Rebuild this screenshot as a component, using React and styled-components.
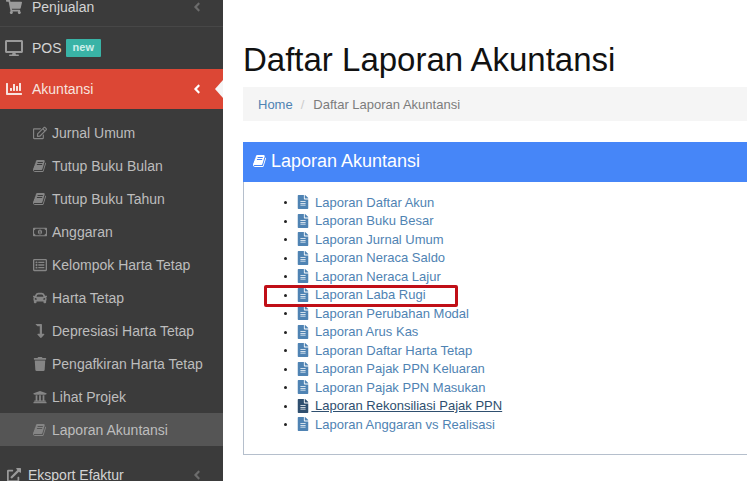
import React from "react";
import styled, { createGlobalStyle } from "styled-components";
import {
  FaAngleLeft,
  FaCar,
  FaChartBar,
  FaDesktop,
  FaExternalLinkAlt,
  FaFileAlt,
  FaLevelDownAlt,
  FaRegEdit,
  FaRegListAlt,
  FaRegMoneyBillAlt,
  FaShoppingCart,
  FaTrash,
  FaUniversity,
} from "react-icons/fa";

const GlobalStyle = createGlobalStyle`
  html, body {
    margin: 0;
    height: 100%;
    overflow: hidden;
    background: #fff;
    font-family: "Liberation Sans", Arial, sans-serif;
  }
  * {
    box-sizing: border-box;
  }
`;

// the slanted book of the old icon font, the packages only have the upright one
const SlantedBook = ({ className }) => (
  <svg className={className} viewBox="0 0 1792 1792" width="1em" height="1em" fill="currentColor">
    <path d="M1639 478q40 57 18 129l-275 906q-19 64-76.5 107.5t-122.5 43.5h-923q-77 0-148.5-53.5t-99.5-131.5q-24-67-2-127 0-4 3-27t4-37q1-8-3-21.5t-3-19.5q2-11 8-21t16.5-23.5 16.5-23.5q23-38 45-91.5t30-91.5q3-10 .5-30t-.5-28q3-11 17-28t17-23q21-36 42-92t25-90q1-9-2.5-32t.5-28q4-13 22-30.5t22-22.5q19-26 42.5-84.5t27.5-96.5q1-8-3-25.5t-2-26.5q2-8 9-18t18-23 17-21q8-12 16.5-30.5t15-35 16-36 19.5-32 26.5-23.5 36-11.5 47.5 5.5l-1 3q38-9 51-9h761q74 0 114 56t18 130l-274 906q-36 119-71.5 153.5t-128.5 34.5h-869q-27 0-38 15-11 16-1 43 24 70 144 70h923q29 0 56-15.5t35-41.5l300-987q7-22 5-57 38 15 59 43zm-1064 2q-4 13 2 22.5t20 9.5h608q13 0 25.5-9.5t16.5-22.5l21-64q4-13-2-22.5t-20-9.5h-608q-13 0-25.5 9.5t-16.5 22.5zm-83 256q-4 13 2 22.5t20 9.5h608q13 0 25.5-9.5t16.5-22.5l21-64q4-13-2-22.5t-20-9.5h-608q-13 0-25.5 9.5t-16.5 22.5z" />
  </svg>
);

const Page = styled.div`
  display: flex;
  width: 747px;
  height: 481px;
  overflow: hidden;
`;

const Sidebar = styled.aside`
  flex: 0 0 223px;
  background: #3b3b3b;
  overflow: hidden;
`;

const Menu = styled.nav`
  margin-top: -13px;
`;

const MenuRow = styled.div`
  position: relative;
  display: flex;
  align-items: center;
  height: ${(p) => p.h || 40}px;
  padding: 0 19px 0 4px;
  color: ${(p) => (p.active ? "#f7e3df" : "#d4d4d4")};
  background: ${(p) => (p.active ? "#dc4735" : "transparent")};
  border-bottom: ${(p) => (p.divider ? "1px solid #474747" : "none")};
  font-size: 14px;
`;

const MenuIcon = styled.span`
  display: flex;
  justify-content: center;
  flex: 0 0 19px;
  margin-right: 9px;
  font-size: ${(p) => p.size || 16}px;
  color: ${(p) => (p.active ? "#f7e3df" : "#9a9a9a")};
`;

const MenuLabel = styled.span`
  display: flex;
  align-items: center;
  flex: 1;
  margin-left: ${(p) => p.shift || 0}px;
`;

const Chevron = styled(FaAngleLeft)`
  font-size: 14px;
  color: ${(p) => (p.$active ? "#fff" : "#6c6c6c")};
`;

const Badge = styled.span`
  margin-left: 4px;
  padding: 2px 7px 3px;
  font-size: 11px;
  font-weight: 700;
  line-height: 13px;
  color: #cdeeea;
  background: #39b3a6;
  border-radius: 1px;
`;

const Notch = styled.span`
  position: absolute;
  top: 11px;
  right: 0;
  border-top: 9px solid transparent;
  border-bottom: 9px solid transparent;
  border-right: 8px solid #f6f6f6;
`;

const SubList = styled.div`
  padding: 7px 0 9px;
`;

const SubRow = styled.div`
  display: flex;
  align-items: center;
  height: 33px;
  padding-left: 32px;
  font-size: 14px;
  color: #bdbdbd;
  background: ${(p) => (p.current ? "#555" : "transparent")};
`;

const SubIcon = styled.span`
  display: flex;
  justify-content: center;
  flex: 0 0 16px;
  margin-right: 4px;
  font-size: 14px;
  color: #858585;
`;

const Main = styled.main`
  flex: 1;
  min-width: 0;
  padding: 0 0 0 20px;
  overflow: hidden;
`;

const Heading = styled.h1`
  margin: 0;
  padding-top: 40px;
  height: 87px;
  font-size: 33px;
  font-weight: 400;
  line-height: 40px;
  color: #111;
`;

const Breadcrumb = styled.div`
  display: flex;
  align-items: center;
  width: 560px;
  height: 34px;
  margin-bottom: 21px;
  padding-left: 15px;
  font-size: 13px;
  color: #7c7c7c;
  background: #f5f5f5;
`;

const Crumb = styled.span`
  color: ${(p) => (p.link ? "#4f83b3" : "#7c7c7c")};
`;

const CrumbSep = styled.span`
  margin: 0 9px 0 8px;
  color: #ccc;
`;

const Panel = styled.section`
  position: relative;
  width: 560px;
  height: 313px;
  border: 1px solid #b5bfcc;
  border-top: 0;
`;

const PanelHead = styled.header`
  display: flex;
  align-items: center;
  height: 40px;
  margin: 0 -1px;
  padding: 0 0 2px 10px;
  font-size: 18px;
  color: #fff;
  background: #4686f8;
`;

const HeadIcon = styled(SlantedBook)`
  flex: none;
  font-size: 14px;
  margin-right: 4px;
`;

const Reports = styled.ul`
  margin: 0;
  padding: 11px 0 0 40px;
  list-style: none;
`;

const Report = styled.li`
  position: relative;
  display: flex;
  align-items: center;
  height: 18.5px;
  padding-left: 13px;
  font-size: 13px;
  color: ${(p) => (p.hover ? "#2f4f6f" : "#4f83b3")};

  &::before {
    content: "";
    position: absolute;
    left: 0;
    top: 8px;
    width: 3px;
    height: 3px;
    border-radius: 50%;
    background: #222;
  }
`;

const ReportIcon = styled(FaFileAlt)`
  flex: none;
  font-size: 14px;
  width: 12px;
  margin-right: 2.4px;
`;

const ReportName = styled.span`
  white-space: pre;
  text-decoration: ${(p) => (p.hover ? "underline" : "none")};
`;

const Highlight = styled.div`
  position: absolute;
  left: 20px;
  top: 143px;
  width: 194px;
  height: 22px;
  border: 3px solid #c00f17;
  border-radius: 2px;
`;

const subItems = [
  ["Jurnal Umum", FaRegEdit],
  ["Tutup Buku Bulan", SlantedBook],
  ["Tutup Buku Tahun", SlantedBook],
  ["Anggaran", FaRegMoneyBillAlt],
  ["Kelompok Harta Tetap", FaRegListAlt],
  ["Harta Tetap", FaCar],
  ["Depresiasi Harta Tetap", FaLevelDownAlt],
  ["Pengafkiran Harta Tetap", FaTrash],
  ["Lihat Projek", FaUniversity],
  ["Laporan Akuntansi", SlantedBook],
];

const reports = [
  "Laporan Daftar Akun",
  "Laporan Buku Besar",
  "Laporan Jurnal Umum",
  "Laporan Neraca Saldo",
  "Laporan Neraca Lajur",
  "Laporan Laba Rugi",
  "Laporan Perubahan Modal",
  "Laporan Arus Kas",
  "Laporan Daftar Harta Tetap",
  "Laporan Pajak PPN Keluaran",
  "Laporan Pajak PPN Masukan",
  "Laporan Rekonsiliasi Pajak PPN",
  "Laporan Anggaran vs Realisasi",
];

const App = () => (
  <Page>
    <GlobalStyle />
    <Sidebar>
      <Menu>
        <MenuRow divider>
          <MenuIcon>
            <FaShoppingCart />
          </MenuIcon>
          <MenuLabel>Penjualan</MenuLabel>
          <Chevron />
        </MenuRow>
        <MenuRow h={42}>
          <MenuIcon size={18}>
            <FaDesktop />
          </MenuIcon>
          <MenuLabel>
            POS
            <Badge>new</Badge>
          </MenuLabel>
        </MenuRow>
        <MenuRow active>
          <MenuIcon active>
            <FaChartBar />
          </MenuIcon>
          <MenuLabel>Akuntansi</MenuLabel>
          <Chevron $active />
          <Notch />
        </MenuRow>
        <SubList>
          {subItems.map(([label, Icon]) => (
            <SubRow key={label} current={label === "Laporan Akuntansi"}>
              <SubIcon>
                <Icon />
              </SubIcon>
              {label}
            </SubRow>
          ))}
        </SubList>
        <MenuRow>
          <MenuIcon size={14}>
            <FaExternalLinkAlt />
          </MenuIcon>
          <MenuLabel shift={-4}>Eksport Efaktur</MenuLabel>
          <Chevron />
        </MenuRow>
      </Menu>
    </Sidebar>
    <Main>
      <Heading>Daftar Laporan Akuntansi</Heading>
      <Breadcrumb>
        <Crumb link>Home</Crumb>
        <CrumbSep>/</CrumbSep>
        <Crumb>Daftar Laporan Akuntansi</Crumb>
      </Breadcrumb>
      <Panel>
        <PanelHead>
          <HeadIcon />
          Laporan Akuntansi
        </PanelHead>
        <Reports>
          {reports.map((name) => {
            const hover = name.includes("Rekonsiliasi");
            return (
              <Report key={name} hover={hover}>
                <ReportIcon />
                <ReportName hover={hover}> {name}</ReportName>
              </Report>
            );
          })}
        </Reports>
        <Highlight />
      </Panel>
    </Main>
  </Page>
);

export default App;
